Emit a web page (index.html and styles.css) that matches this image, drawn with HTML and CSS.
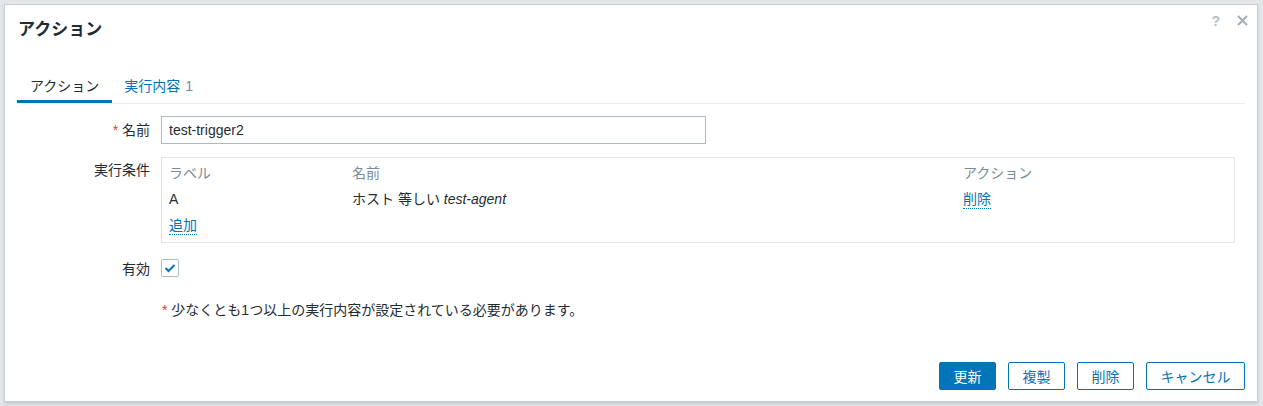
FILE: index.html
```html
<!DOCTYPE html>
<html lang="ja">
<head>
<meta charset="utf-8">
<title>アクション</title>
<link rel="stylesheet" href="styles.css">
</head>
<body>
<div class="modal">
  <div class="modal-header">
    <h4 class="modal-title">アクション</h4>
    <div class="header-controls">
      <span class="help">?</span>
      <svg class="close" width="11" height="11" viewBox="0 0 11 11"><path d="M1 1 L10 10 M10 1 L1 10" stroke="#a3aeb6" stroke-width="2" fill="none"/></svg>
    </div>
  </div>
  <div class="modal-body">
    <ul class="tabs">
      <li class="tab active">アクション</li>
      <li class="tab link">実行内容<span class="count">1</span></li>
    </ul>
    <div class="form">
      <div class="label label-mid"><span class="req">*</span> 名前</div>
      <div class="field"><input class="text-input" type="text" value="test-trigger2"></div>

      <div class="label label-top">実行条件</div>
      <div class="field">
        <div class="cond-table">
          <div class="cond-row head">
            <div>ラベル</div><div>名前</div><div>アクション</div>
          </div>
          <div class="cond-row">
            <div>A</div><div>ホスト 等しい <em>test-agent</em></div><div><span class="dlink">削除</span></div>
          </div>
          <div class="cond-row">
            <div><span class="dlink">追加</span></div><div></div><div></div>
          </div>
        </div>
      </div>

      <div class="label label-cb">有効</div>
      <div class="field field-cb">
        <span class="checkbox"><svg width="12" height="10" viewBox="0 0 12 10"><path d="M1.5 5 L4.5 8 L10.5 2" stroke="#0275b8" stroke-width="2" fill="none"/></svg></span>
      </div>

      <div class="label"></div>
      <div class="field note"><span class="req">*</span> 少なくとも1つ以上の実行内容が設定されている必要があります。</div>
    </div>
  </div>
  <div class="modal-footer">
    <button class="btn primary">更新</button>
    <button class="btn alt">複製</button>
    <button class="btn alt">削除</button>
    <button class="btn alt">キャンセル</button>
  </div>
</div>
</body>
</html>
```

FILE: styles.css
```css
* { box-sizing: border-box; }
html, body { height: 100%; }
body {
  margin: 0;
  padding: 4px 0 0 4px;
  background: #e3e7ea;
  font-family: "Liberation Sans", "Noto Sans CJK JP", sans-serif;
  font-size: 14px;
  color: #1f2c33;
  overflow: hidden;
}
.modal {
  width: 1254px;
  height: 398px;
  background: #fff;
  border: 1px solid #c7d0d6;
  box-shadow: 0 2px 3px rgba(0, 0, 0, 0.12);
  display: flex;
  flex-direction: column;
}
.modal-header {
  height: 49px;
  display: flex;
  justify-content: space-between;
  padding: 0 9px 0 13px;
}
.modal-title {
  margin: 0;
  font-size: 17px;
  font-weight: bold;
  line-height: 49px;
  color: #1f2c33;
}
.header-controls {
  display: flex;
  align-items: flex-start;
  gap: 17px;
  padding-top: 10px;
}
.help {
  color: #b3bfc7;
  font-size: 14px;
  line-height: 12px;
  font-weight: bold;
}
.close { display: block; }
.modal-body {
  padding: 20px 12px 0;
}
.tabs {
  list-style: none;
  margin: 0;
  padding: 0;
  display: flex;
  border-bottom: 1px solid #ebeef0;
}
.tab {
  padding: 0 13px 2px;
  line-height: 24px;
  border-bottom: 3px solid transparent;
}
.tab.active { border-bottom-color: #0275b8; color: #1f2c33; }
.tab.link { color: #0275b8; padding-left: 12px; }
.count { color: #768d99; margin-left: 5px; }
.form {
  margin-top: 12px;
  display: grid;
  grid-template-columns: 133px 1fr;
  column-gap: 11px;
  row-gap: 13px;
}
.label { text-align: right; }
.label-mid { line-height: 28px; }
.label-top { line-height: 26px; }
.label-cb { line-height: 26px; }
.req { color: #e33734; }
.text-input {
  display: block;
  width: 545px;
  height: 28px;
  border: 1px solid #acbbc2;
  padding: 0 7px;
  font-family: inherit;
  font-size: 14px;
  color: #1f2c33;
  background: #fff;
}
.cond-table {
  width: 1074px;
  border: 1px solid #e1e6e9;
  padding: 2px 7px 4px;
}
.cond-row {
  display: grid;
  grid-template-columns: 183px 611px 1fr;
  line-height: 26px;
}
.cond-row.head { color: #768d99; }
.cond-row em { font-style: italic; }
.dlink {
  display: inline-block;
  line-height: 18px;
  color: #0275b8;
  border-bottom: 1px dotted #0275b8;
}
.field-cb { height: 26px; }
.checkbox {
  display: flex;
  align-items: center;
  justify-content: center;
  width: 18px;
  height: 18px;
  margin-top: 3px;
  border: 1px solid #acbbc2;
  border-radius: 2px;
}
.note {
  margin-top: 5px;
  line-height: 20px;
  padding-left: 1px;
}
.modal-footer {
  margin-top: auto;
  padding: 0 12px 11px;
  display: flex;
  justify-content: flex-end;
  gap: 12px;
}
.btn {
  height: 28px;
  padding: 0 13.5px;
  border-radius: 2px;
  font-family: inherit;
  font-size: 14px;
  border: 1px solid #0275b8;
  cursor: pointer;
}
.btn.primary { background: #0275b8; color: #fff; }
.btn.alt { background: #fff; color: #0275b8; }
```
